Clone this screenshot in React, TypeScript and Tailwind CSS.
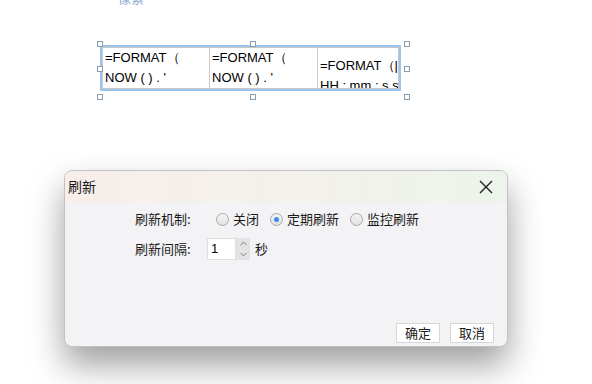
import { ChevronUp, ChevronDown } from "lucide-react";

const cjk = "font-['Microsoft_YaHei','Noto_Sans_CJK_SC',sans-serif]";

const cells = [
  { l1: "=FORMAT（", l2: "NOW ( ) . '", pad: "pt-0" },
  { l1: "=FORMAT（", l2: "NOW ( ) . '", pad: "pt-0" },
  { l1: "=FORMAT（|", l2: "HH : mm : s s", pad: "pt-[8px]" },
];

const handles = [
  "left-[-5px] top-[-6px]",
  "left-[148px] top-[-6px]",
  "left-[302px] top-[-6px]",
  "left-[-5px] top-[19px]",
  "left-[302px] top-[19px]",
  "left-[-5px] top-[47px]",
  "left-[148px] top-[47px]",
  "left-[302px] top-[47px]",
];

function Radio({ label, checked }: { label: string; checked?: boolean }) {
  return (
    <label className="flex items-center gap-[4px]">
      <span className="w-[13px] h-[13px] rounded-full border border-[#a9a9a9] bg-gradient-to-b from-[#f4f4f4] to-[#e2e2e2] flex items-center justify-center">
        {checked && <span className="w-[5px] h-[5px] rounded-full bg-[#3a8ee6]" />}
      </span>
      <span>{label}</span>
    </label>
  );
}

export default function App() {
  return (
    <div className={`w-[592px] h-[384px] bg-white overflow-hidden flex flex-col ${cjk}`}>
      {/* cut-off hint text at the top */}
      <div className="h-[6px] shrink-0 overflow-hidden pl-[105px]">
        <div className="mt-[-10px] text-[13px] leading-[16px] text-[#8aa8cc]">…像素</div>
      </div>

      {/* selected formula cells */}
      <div className="relative shrink-0 ml-[100px] mt-[39px] w-[301px] h-[46px] border-2 border-[#9cc4ef]">
        <div className="h-full border border-[#c9c9c9] grid grid-cols-[107px_108px_1fr] font-['Liberation_Sans',sans-serif] text-[13px] leading-[20px] text-black">
          {cells.map((c, i) => (
            <div
              key={i}
              className={`overflow-hidden whitespace-nowrap pl-[2px] ${c.pad} ${i < 2 ? "border-r border-[#c9c9c9]" : ""}`}
            >
              <div>{c.l1}</div>
              <div>{c.l2}</div>
            </div>
          ))}
        </div>
        {handles.map((h) => (
          <span key={h} className={`absolute ${h} w-[6px] h-[6px] bg-white border border-[#8b9bb0]`} />
        ))}
      </div>

      {/* dialog */}
      <div className="shrink-0 ml-[64px] mt-[79px] w-[444px] h-[177px] rounded-[8px] border border-[#c2c2c2] bg-[#f3f3f5] shadow-[0_18px_34px_rgba(0,0,0,0.38)] overflow-hidden flex flex-col text-[13px] text-[#1a1a1a]">
        <div className="h-[31px] shrink-0 flex items-center justify-between pl-[3px] pr-[14px] bg-gradient-to-r from-[#f8eeea] via-[#f3f1ea] to-[#ecf4ec]">
          <span className="text-[14px]">刷新</span>
          <svg width="14" height="14" viewBox="0 0 14 14" className="text-[#1f1f1f]">
            <path d="M1 1L13 13M13 1L1 13" stroke="currentColor" strokeWidth="1.4" fill="none" />
          </svg>
        </div>

        <div className="flex flex-col pl-[70px] pt-[7px] gap-[9px]">
          <div className="flex items-center h-[20px]">
            <span className="w-[81px]">刷新机制:</span>
            <div className="flex items-center gap-[11px]">
              <Radio label="关闭" />
              <Radio label="定期刷新" checked />
              <Radio label="监控刷新" />
            </div>
          </div>
          <div className="flex items-center h-[22px]">
            <span className="w-[72px]">刷新间隔:</span>
            <div className="flex h-[22px] items-stretch">
              <div className="w-[29px] bg-white border border-[#e0e0e0] pl-[3px] leading-[20px] text-black font-['Liberation_Sans',sans-serif]">
                1
              </div>
              <div className="w-[14px] bg-[#e3e3e5] flex flex-col items-center justify-center text-[#555]">
                <ChevronUp className="w-[11px] h-[11px]" strokeWidth={1.5} />
                <ChevronDown className="w-[11px] h-[11px]" strokeWidth={1.5} />
              </div>
            </div>
            <span className="ml-[5px]">秒</span>
          </div>
        </div>

        <div className="mt-auto mb-[3px] mr-[13px] flex justify-end gap-[10px]">
          <button className="w-[44px] h-[20px] bg-white border border-[#d6d6d6] text-[13px] leading-[18px]">确定</button>
          <button className="w-[44px] h-[20px] bg-white border border-[#d6d6d6] text-[13px] leading-[18px]">取消</button>
        </div>
      </div>
    </div>
  );
}
